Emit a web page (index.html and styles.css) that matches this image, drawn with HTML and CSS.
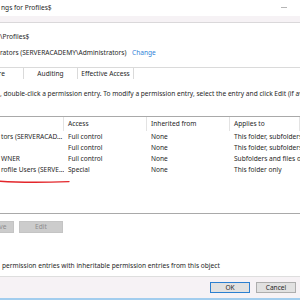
FILE: index.html
```html
<!DOCTYPE html>
<html lang="en">
	<head>
		<meta charset="UTF-8" />
		<title>Advanced Security Settings for Profiles$</title>
		<link rel="stylesheet" href="styles.css">
	</head>
	<body>
		<div class="titlebar">
			<span class="title">ngs for Profiles$</span>
			<span class="min-btn"></span>
		</div>
		<div class="band"></div>

		<div class="main">
			<div class="line name">\Profiles$</div>
			<div class="line owner">
				<span class="owner-name">rators (SERVERACADEMY\Administrators)</span>
				<a class="link" href="#">Change</a>
			</div>

			<div class="tabs">
				<div class="tab tab-share">Share</div>
				<div class="tab tab-audit">Auditing</div>
				<div class="tab tab-effective">Effective Access</div>
			</div>

			<div class="line hint">, double-click a permission entry. To modify a permission entry, select the entry and click Edit (if available).</div>

			<div class="list">
				<div class="list-head">
					<div class="cell first"></div>
					<div class="cell">Access</div>
					<div class="cell">Inherited from</div>
					<div class="cell">Applies to</div>
				</div>
				<div class="row">
					<div class="cell first">tors (SERVERACAD...</div>
					<div class="cell">Full control</div>
					<div class="cell">None</div>
					<div class="cell">This folder, subfolders and files</div>
				</div>
				<div class="row">
					<div class="cell first"></div>
					<div class="cell">Full control</div>
					<div class="cell">None</div>
					<div class="cell">This folder, subfolders and files</div>
				</div>
				<div class="row">
					<div class="cell first">WNER</div>
					<div class="cell">Full control</div>
					<div class="cell">None</div>
					<div class="cell">Subfolders and files only</div>
				</div>
				<div class="row">
					<div class="cell first">rofile Users (SERVE...</div>
					<div class="cell">Special</div>
					<div class="cell">None</div>
					<div class="cell">This folder only</div>
				</div>
				<!-- hand drawn underline on the screenshot -->
				<svg class="scribble" width="72" height="6" viewBox="0 0 72 6">
					<path d="M0 2.2 C 20 3.6, 45 3.4, 69 2.6" fill="none" stroke="#e3262b" stroke-width="1.4" stroke-linecap="round" />
				</svg>
			</div>

			<div class="actions">
				<button class="btn btn-off btn-remove">Remove</button>
				<button class="btn btn-off btn-edit">Edit</button>
			</div>

			<div class="line replace">permission entries with inheritable permission entries from this object</div>
		</div>

		<div class="footer">
			<button class="btn btn-ok">OK</button>
			<button class="btn btn-cancel">Cancel</button>
		</div>
	</body>
</html>
```

FILE: styles.css
```css
html,
body {
	margin: 0;
	padding: 0;
}

body {
	width: 300px;
	height: 300px;
	overflow: hidden;
	background: #ffffff;
	font-family: "Noto Sans", "Open Sans", sans-serif;
	font-size: 6.6px;
	color: #262626;
}

.titlebar {
	height: 16px;
	display: flex;
	align-items: center;
	justify-content: space-between;
	padding: 0 13px 1px 1px;
	box-sizing: border-box;
	white-space: nowrap;
}

.min-btn {
	width: 6px;
	border-top: 1px solid #b5b5b5;
}

.band {
	height: 6px;
	background: #f6f2f5;
	border-bottom: 1px solid #dad8da;
}

.main {
	padding-top: 8px;
}

.line {
	height: 11px;
	line-height: 11px;
	white-space: nowrap;
	overflow: hidden;
}

.owner {
	margin-top: 5px;
	display: flex;
}

.owner-name {
	width: 132px;
}

.link {
	color: #2f7fd8;
	text-decoration: none;
}

.tabs {
	margin-top: 9px;
	height: 12px;
	display: flex;
	border-top: 1px solid #dadada;
	box-sizing: border-box;
}

.tab {
	flex: none;
	line-height: 11px;
	text-align: center;
	border-right: 1px solid #dadada;
	box-sizing: border-box;
}

.tab-share {
	width: 55px;
	margin-left: -31px;
}

.tab-audit {
	width: 54px;
}

.tab-effective {
	width: 56px;
}

.hint {
	margin-top: 9px;
}

.list {
	position: relative;
	margin-top: 17px;
	height: 98px;
	border-top: 1px solid #a9a9a9;
	border-bottom: 1px solid #a9a9a9;
	box-sizing: border-box;
}

.list-head,
.row {
	display: grid;
	grid-template-columns: 64px 83px 83px 1fr;
	white-space: nowrap;
}

.list-head {
	height: 14px;
	line-height: 13px;
}

.list-head .cell {
	border-right: 1px solid #e3e3e3;
}

.row {
	height: 11px;
	line-height: 11px;
}

.cell {
	padding-left: 4px;
	overflow: hidden;
}

.cell.first {
	padding-left: 1px;
}

.scribble {
	position: absolute;
	left: 0;
	top: 62px;
}

.actions {
	margin-top: 7px;
	display: flex;
	gap: 5px;
}

.btn {
	height: 12px;
	margin: 0;
	padding: 0;
	font-family: inherit;
	font-size: 6.6px;
	line-height: 10px;
	color: #262626;
	background: #e1e1e1;
	border: 1px solid #adadad;
	box-sizing: border-box;
}

.btn-off {
	background: #cccccc;
	border-color: #c4c4c4;
	color: #8c8c8c;
}

.btn-remove {
	width: 40px;
	margin-left: -26px;
}

.btn-edit {
	width: 44px;
}

.replace {
	margin-top: 27px;
	padding-left: 2px;
}

.footer {
	margin-top: 5px;
	height: 24px;
	background: #f6f2f5;
	border-top: 1px solid #dedede;
	border-bottom: 2px solid #a2cdee;
	box-sizing: border-box;
	display: flex;
	justify-content: flex-end;
	gap: 6px;
	padding: 5px 4px 0 0;
}

.btn-ok,
.btn-cancel {
	width: 40px;
	height: 11px;
	line-height: 9px;
}

.btn-ok {
	border-color: #2b7fd0;
}
```
